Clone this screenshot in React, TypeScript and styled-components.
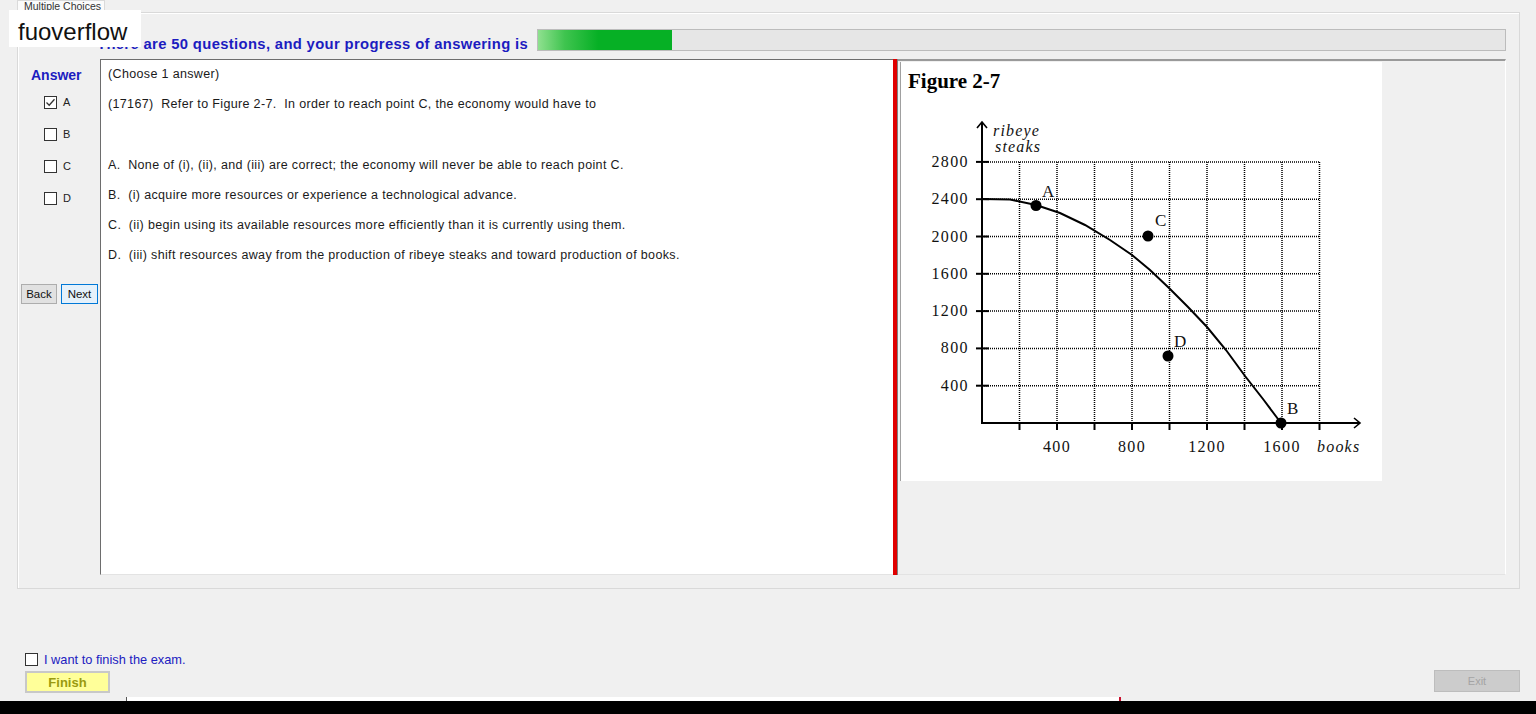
import styled, { createGlobalStyle } from 'styled-components';

const GlobalStyle = createGlobalStyle`
  html, body {
    margin: 0;
    padding: 0;
    background: #f0f0f0;
    font-family: "Liberation Sans", Arial, sans-serif;
  }
  #root {
    height: 714px;
    overflow: hidden;
  }
`;

const options = [
  { key: 'A', text: 'None of (i), (ii), and (iii) are correct; the economy will never be able to reach point C.' },
  { key: 'B', text: '(i) acquire more resources or experience a technological advance.' },
  { key: 'C', text: '(ii) begin using its available resources more efficiently than it is currently using them.' },
  { key: 'D', text: '(iii) shift resources away from the production of ribeye steaks and toward production of books.' },
];

const Check = ({ checked }: { checked?: boolean }) => (
  <CheckBox>
    {checked && (
      <svg width="11" height="11" viewBox="0 0 11 11">
        <path d="M1.5 5.5 L4.2 8.2 L9.5 2.2" fill="none" stroke="#333" strokeWidth="1.3" />
      </svg>
    )}
  </CheckBox>
);

const Y_ZERO = 424;
const Y_STEP = 37.3;
const X_ZERO = 982;
const X_STEP = 37.5;

const Chart = () => {
  const yLines = [1, 2, 3, 4, 5, 6, 7].map((i) => Y_ZERO - i * Y_STEP);
  const xLines = [1, 2, 3, 4, 5, 6, 7, 8, 9].map((i) => X_ZERO + i * X_STEP);
  const curve =
    'M982,200 L1010,200.5 L1036,206 L1060,214 L1085,226 L1110,241 L1132,256 L1150,271 L1169,289 L1188,308 L1207,328 L1226,351 L1245,377 L1263,400 L1281,424';
  return (
    <svg width="481" height="419" viewBox="901 63 481 419">
      <text x="908" y="89" fontFamily="Liberation Serif, serif" fontWeight="bold" fontSize="21">
        Figure 2-7
      </text>
      {yLines.map((y) => (
        <line key={y} x1={X_ZERO} x2={1320} y1={y} y2={y} stroke="#000" strokeWidth="1.5" strokeDasharray="1 1" />
      ))}
      {xLines.map((x) => (
        <line key={x} x1={x} x2={x} y1={162.9} y2={Y_ZERO} stroke="#000" strokeWidth="1.5" strokeDasharray="1 1" />
      ))}
      {yLines.map((y) => (
        <line key={'t' + y} x1={976} x2={989} y1={y} y2={y} stroke="#000" strokeWidth="2" />
      ))}
      {xLines.map((x) => (
        <line key={'t' + x} x1={x} x2={x} y1={Y_ZERO} y2={431} stroke="#000" strokeWidth="2" />
      ))}
      <line x1={X_ZERO} x2={X_ZERO} y1={Y_ZERO + 1} y2={123} stroke="#000" strokeWidth="2" />
      <path d="M977,129 L982,123 L987,129" fill="none" stroke="#000" strokeWidth="1.6" />
      <line x1={X_ZERO - 1} x2={1360} y1={Y_ZERO} y2={Y_ZERO} stroke="#000" strokeWidth="2" />
      <path d="M1354,419 L1360,424 L1354,429" fill="none" stroke="#000" strokeWidth="1.6" />
      <g fontFamily="Liberation Serif, serif" fontSize="16" fill="#111" letterSpacing="1.4">
        {['400', '800', '1200', '1600', '2000', '2400', '2800'].map((label, i) => (
          <text key={label} x={969} y={yLines[i] + 5} textAnchor="end">
            {label}
          </text>
        ))}
        {['400', '800', '1200', '1600'].map((label, i) => (
          <text key={'x' + label} x={X_ZERO + (i + 1) * 2 * X_STEP} y={453} textAnchor="middle">
            {label}
          </text>
        ))}
      </g>
      <g fontFamily="Liberation Serif, serif" fontStyle="italic" fontSize="16" fill="#111" letterSpacing="1.2">
        <text x="993" y="137">ribeye</text>
        <text x="995" y="153">steaks</text>
        <text x="1317" y="453">books</text>
      </g>
      <path d={curve} fill="none" stroke="#000" strokeWidth="2" />
      <g fill="#000">
        <circle cx="1036" cy="206.5" r="5.5" />
        <circle cx="1148" cy="237" r="5.5" />
        <circle cx="1168" cy="357" r="5.5" />
        <circle cx="1281" cy="424" r="5.5" />
      </g>
      <g fontFamily="Liberation Serif, serif" fontSize="17" fill="#111">
        <text x="1042" y="198">A</text>
        <text x="1155" y="227">C</text>
        <text x="1174" y="348">D</text>
        <text x="1287" y="415">B</text>
      </g>
    </svg>
  );
};

export default function App() {
  return (
    <Page>
      <GlobalStyle />
      <Watermark>fuoverflow</Watermark>
      <TabArea>
        <TabHeader>Multiple Choices</TabHeader>
        <TabPanel>
          <HeaderRow>
            <HeaderText>There are 50 questions, and your progress of answering is</HeaderText>
            <Progress>
              <ProgressFill style={{ width: `${(134 / 968) * 100}%` }} />
            </Progress>
          </HeaderRow>
          <BodyRow>
            <AnswerColumn>
              <AnswerTitle>Answer</AnswerTitle>
              <ChoiceList>
                {options.map((o) => (
                  <ChoiceRow key={o.key}>
                    <Check checked={o.key === 'A'} />
                    <span>{o.key}</span>
                  </ChoiceRow>
                ))}
              </ChoiceList>
              <NavButtons>
                <NavButton $width={36}>Back</NavButton>
                <NavButton $width={37} $focused>
                  Next
                </NavButton>
              </NavButtons>
            </AnswerColumn>
            <QuestionPanel>
              <Line>(Choose 1 answer)</Line>
              <Line>{'(17167)  Refer to Figure 2-7.  In order to reach point C, the economy would have to'}</Line>
              <Line />
              {options.map((o) => (
                <Line key={o.key}>{`${o.key}.  ${o.text}`}</Line>
              ))}
            </QuestionPanel>
            <Splitter />
            <FigurePanel>
              <FigureBox>
                <Chart />
              </FigureBox>
            </FigurePanel>
          </BodyRow>
        </TabPanel>
      </TabArea>
      <BottomArea>
        <FinishRow>
          <CheckBox />
          <FinishLabel>I want to finish the exam.</FinishLabel>
        </FinishRow>
        <ButtonRow>
          <FinishButton>Finish</FinishButton>
          <ExitButton disabled>Exit</ExitButton>
        </ButtonRow>
      </BottomArea>
      <Taskbar>
        <TaskbarWindow />
      </Taskbar>
    </Page>
  );
}

const Page = styled.div`
  position: relative;
  height: 714px;
  display: flex;
  flex-direction: column;
  background: #f0f0f0;
`;

const Watermark = styled.div`
  position: absolute;
  left: 9px;
  top: 10px;
  width: 132px;
  height: 37px;
  background: #fff;
  font-family: "Liberation Sans", Arial, sans-serif;
  font-size: 24px;
  color: #111;
  padding-left: 9px;
  box-sizing: border-box;
  line-height: 43px;
  z-index: 2;
`;

const TabArea = styled.div`
  margin-left: 17px;
  width: 1503px;
  display: flex;
  flex-direction: column;
`;

const TabHeader = styled.div`
  width: 88px;
  height: 12px;
  box-sizing: border-box;
  background: #fbfbfb;
  border: 1px solid #dadada;
  border-bottom: none;
  font-size: 10.5px;
  color: #333;
  line-height: 10px;
  padding-left: 6px;
  white-space: nowrap;
`;

const TabPanel = styled.div`
  height: 577px;
  box-sizing: border-box;
  border: 1px solid #d9d9d9;
  box-shadow: inset 1px 1px 0 #fff;
  background: #f0f0f0;
  padding: 0 13px 13px 0;
  display: flex;
  flex-direction: column;
`;

const HeaderRow = styled.div`
  height: 46px;
  display: flex;
  align-items: flex-start;
  padding-top: 16px;
  box-sizing: border-box;
`;

const HeaderText = styled.div`
  width: 440px;
  padding-left: 79px;
  padding-top: 7px;
  flex-shrink: 0;
  font-size: 14.8px;
  font-weight: bold;
  letter-spacing: 0.35px;
  color: #1c1cc0;
  white-space: nowrap;
`;

const Progress = styled.div`
  flex: 1;
  height: 22px;
  box-sizing: border-box;
  border: 1px solid #bcbcbc;
  background: #e6e6e6;
  display: flex;
`;

const ProgressFill = styled.div`
  height: 100%;
  background: linear-gradient(to right, #8fe08f 0%, #3fc44f 20%, #06b025 45%, #06b025 100%);
`;

const BodyRow = styled.div`
  flex: 1;
  display: flex;
`;

const AnswerColumn = styled.div`
  width: 82px;
  flex-shrink: 0;
  display: flex;
  flex-direction: column;
`;

const AnswerTitle = styled.div`
  margin-top: 8px;
  padding-left: 13px;
  height: 16px;
  font-size: 14px;
  font-weight: bold;
  color: #1c1cc0;
`;

const ChoiceList = styled.div`
  margin-top: 3px;
  display: flex;
  flex-direction: column;
`;

const ChoiceRow = styled.div`
  height: 32px;
  display: flex;
  align-items: center;
  padding-left: 26px;
  gap: 6px;
  font-size: 11px;
  color: #222;
`;

const CheckBox = styled.div`
  width: 13px;
  height: 13px;
  box-sizing: border-box;
  border: 1px solid #333;
  background: #fff;
  display: flex;
  align-items: center;
  justify-content: center;
  flex-shrink: 0;
`;

const NavButtons = styled.div`
  margin-top: 70px;
  padding-left: 3px;
  display: flex;
  gap: 4px;
`;

const NavButton = styled.button<{ $focused?: boolean; $width: number }>`
  width: ${(p) => p.$width}px;
  height: 20px;
  padding: 0;
  font-family: "Liberation Sans", Arial, sans-serif;
  font-size: 11.5px;
  color: #111;
  background: ${(p) => (p.$focused ? '#e5f1fb' : '#e1e1e1')};
  border: 1px solid ${(p) => (p.$focused ? '#0078d7' : '#adadad')};
  border-radius: 0;
`;

const QuestionPanel = styled.div`
  width: 793px;
  flex-shrink: 0;
  box-sizing: border-box;
  background: #fff;
  border-top: 1px solid #6d6d6d;
  border-left: 1px solid #6d6d6d;
  border-bottom: 1px solid #e3e3e3;
  padding: 2px 0 0 7px;
  display: flex;
  flex-direction: column;
  gap: 6.2px;
`;

const Line = styled.div`
  height: 24px;
  line-height: 24px;
  font-size: 12.5px;
  letter-spacing: 0.35px;
  color: #1a1a1a;
  white-space: pre;
`;

const Splitter = styled.div`
  width: 4px;
  background: #e00000;
  border-right: 1px solid #808080;
  flex-shrink: 0;
`;

const FigurePanel = styled.div`
  flex: 1;
  box-sizing: border-box;
  border-top: 2px solid #9a9a9a;
  border-right: 1px solid #fff;
  border-bottom: 1px solid #e3e3e3;
  padding: 1px 0 0 2px;
`;

const FigureBox = styled.div`
  width: 481px;
  height: 419px;
  background: #fff;
  border-left: 1px solid #a0a0a0;
  display: flex;
`;

const BottomArea = styled.div`
  flex: 1;
  display: flex;
  flex-direction: column;
  justify-content: flex-end;
  padding: 0 16px 4px 25px;
`;

const FinishRow = styled.div`
  display: flex;
  align-items: center;
  gap: 6px;
  height: 14px;
  margin-bottom: 5px;
`;

const FinishLabel = styled.span`
  font-size: 12.8px;
  color: #2020c0;
  letter-spacing: 0;
`;

const ButtonRow = styled.div`
  display: flex;
  justify-content: space-between;
  align-items: flex-start;
`;

const FinishButton = styled.button`
  width: 85px;
  height: 22px;
  background: #ffff99;
  border: 2px solid #c8c8c8;
  font-family: "Liberation Sans", Arial, sans-serif;
  font-size: 13px;
  font-weight: bold;
  color: #9a9a10;
  padding: 0;
`;

const ExitButton = styled.button`
  width: 86px;
  height: 22px;
  background: #cccccc;
  border: 1px solid #bdbdbd;
  font-family: "Liberation Sans", Arial, sans-serif;
  font-size: 11px;
  color: #a4a4a4;
  padding: 0;
  margin-top: -1px;
`;

const Taskbar = styled.div`
  height: 17px;
  flex-shrink: 0;
  background: linear-gradient(to bottom, #f0f0f0 0, #f0f0f0 4px, #000 4px);
  padding-left: 126px;
`;

const TaskbarWindow = styled.div`
  width: 992px;
  height: 4px;
  background: #fff;
  border-left: 1px solid #555;
  border-right: 2px solid #c8102e;
`;
